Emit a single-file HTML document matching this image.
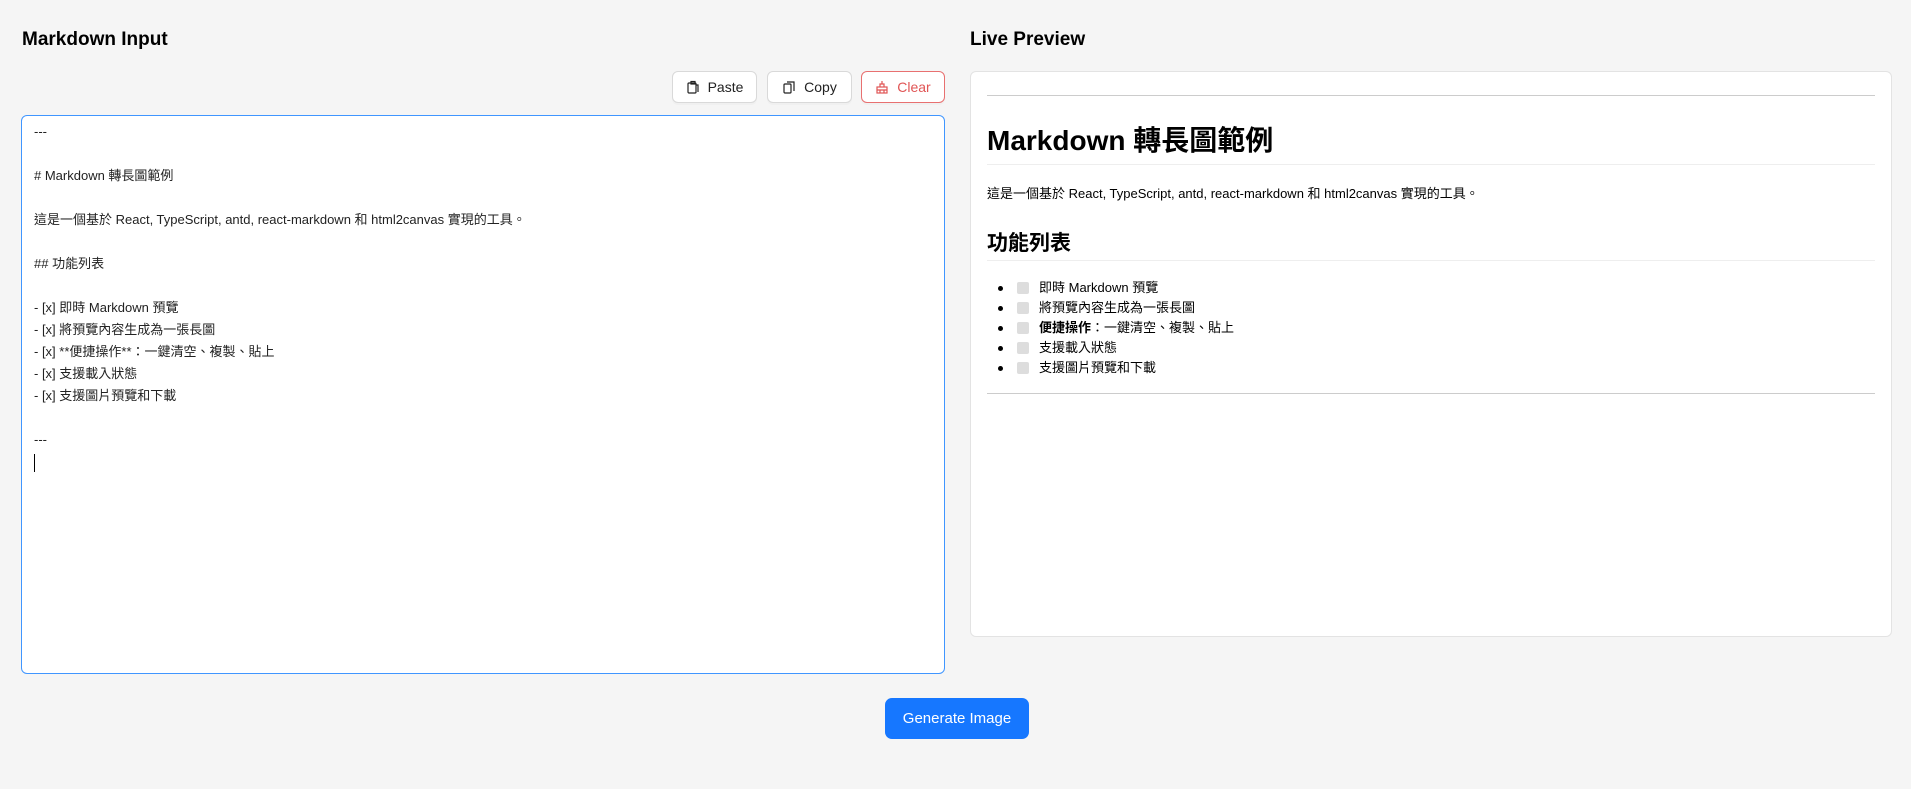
<!DOCTYPE html>
<html><head><meta charset="utf-8"><style>
*{box-sizing:border-box;margin:0;padding:0}
body{width:1911px;height:789px;background:#f5f5f5;font-family:"Liberation Sans","Noto Sans CJK TC",sans-serif;color:#000;position:relative;overflow:hidden}
.h{position:absolute;font-size:19px;font-weight:bold;top:29px}
.btn{position:absolute;top:71px;height:32px;background:#fff;border:1px solid #d9d9d9;border-radius:6px;font-size:14px;display:flex;align-items:center;justify-content:center;gap:8px;color:#222;box-shadow:0 2px 0 rgba(0,0,0,0.02)}
.btn svg{width:14px;height:14px}
.ta{position:absolute;left:21px;top:115px;width:924px;height:559px;background:#fff;border:1px solid #4096ff;border-radius:6px;padding:5px 12px;font-size:13px;line-height:22px;color:#222;white-space:pre}
.card{position:absolute;left:970px;top:71px;width:922px;height:566px;background:#fff;border:1px solid #e3e3e3;border-radius:6px}
.hr{position:absolute;left:16px;right:16px;height:1px;background:#aaa;border-bottom:1px solid #ccc}
.card .t{position:absolute;left:16px;right:16px}
li{list-style:none;position:relative;padding-left:68px;height:20px;line-height:20px;font-size:13px}
li:before{content:"";position:absolute;left:27px;top:8px;width:5px;height:5px;border-radius:50%;background:#000}
li i{position:absolute;left:46px;top:4px;width:12px;height:12px;border-radius:2px;background:#ddd}
.gen{position:absolute;left:885px;top:698px;width:144px;height:41px;background:#1677ff;color:#fff;border-radius:7px;font-size:15px;display:flex;align-items:center;justify-content:center}
</style></head><body>
<div class="h" style="left:22px">Markdown Input</div>
<div class="h" style="left:970px">Live Preview</div>
<div class="btn" style="left:672px;width:85px"><svg viewBox="0 0 14 14" fill="none" stroke="#222" stroke-width="1.2"><rect x="2" y="3" width="8" height="10" rx="1"/><rect x="5" y="1.5" width="4" height="2.5"/><path d="M10 5h2v7"/></svg>Paste</div>
<div class="btn" style="left:767px;width:85px"><svg viewBox="0 0 14 14" fill="none" stroke="#222" stroke-width="1.2"><rect x="2" y="4" width="7" height="9" rx="1"/><path d="M5 2h7v9"/></svg>Copy</div>
<div class="btn" style="left:861px;width:84px;border-color:#e87070;color:#e05555"><svg viewBox="0 0 14 14" fill="none" stroke="#e05555" stroke-width="1.2"><rect x="2" y="7" width="10" height="6"/><path d="M5 7V4h4v3M7 4V1M2 10h10M5 10v3M9 10v3"/></svg>Clear</div>
<div class="ta">---

# Markdown 轉長圖範例

這是一個基於 React, TypeScript, antd, react-markdown 和 html2canvas 實現的工具。

## 功能列表

- [x] 即時 Markdown 預覽
- [x] 將預覽內容生成為一張長圖
- [x] **便捷操作**：一鍵清空、複製、貼上
- [x] 支援載入狀態
- [x] 支援圖片預覽和下載

---
<span style="display:inline-block;width:1px;height:18px;background:#000;vertical-align:middle"></span></div>
<div class="card">
<div class="hr" style="top:23px"></div>
<div class="t" style="top:50px;font-size:28px;line-height:38px;font-weight:bold">Markdown 轉長圖範例</div>
<div class="t" style="top:92px;height:1px;background:#eee"></div>
<div class="t" style="top:112px;font-size:13px;line-height:20px">這是一個基於 React, TypeScript, antd, react-markdown 和 html2canvas 實現的工具。</div>
<div class="t" style="top:158px;font-size:21px;line-height:28px;font-weight:bold">功能列表</div>
<div class="t" style="top:188px;height:1px;background:#eee"></div>
<ul class="t" style="top:206px;left:0">
<li><i></i>即時 Markdown 預覽</li>
<li><i></i>將預覽內容生成為一張長圖</li>
<li><i></i><b>便捷操作</b>：一鍵清空、複製、貼上</li>
<li><i></i>支援載入狀態</li>
<li><i></i>支援圖片預覽和下載</li>
</ul>
<div class="hr" style="top:321px"></div>
</div>
<div class="gen">Generate Image</div>
</body></html>
